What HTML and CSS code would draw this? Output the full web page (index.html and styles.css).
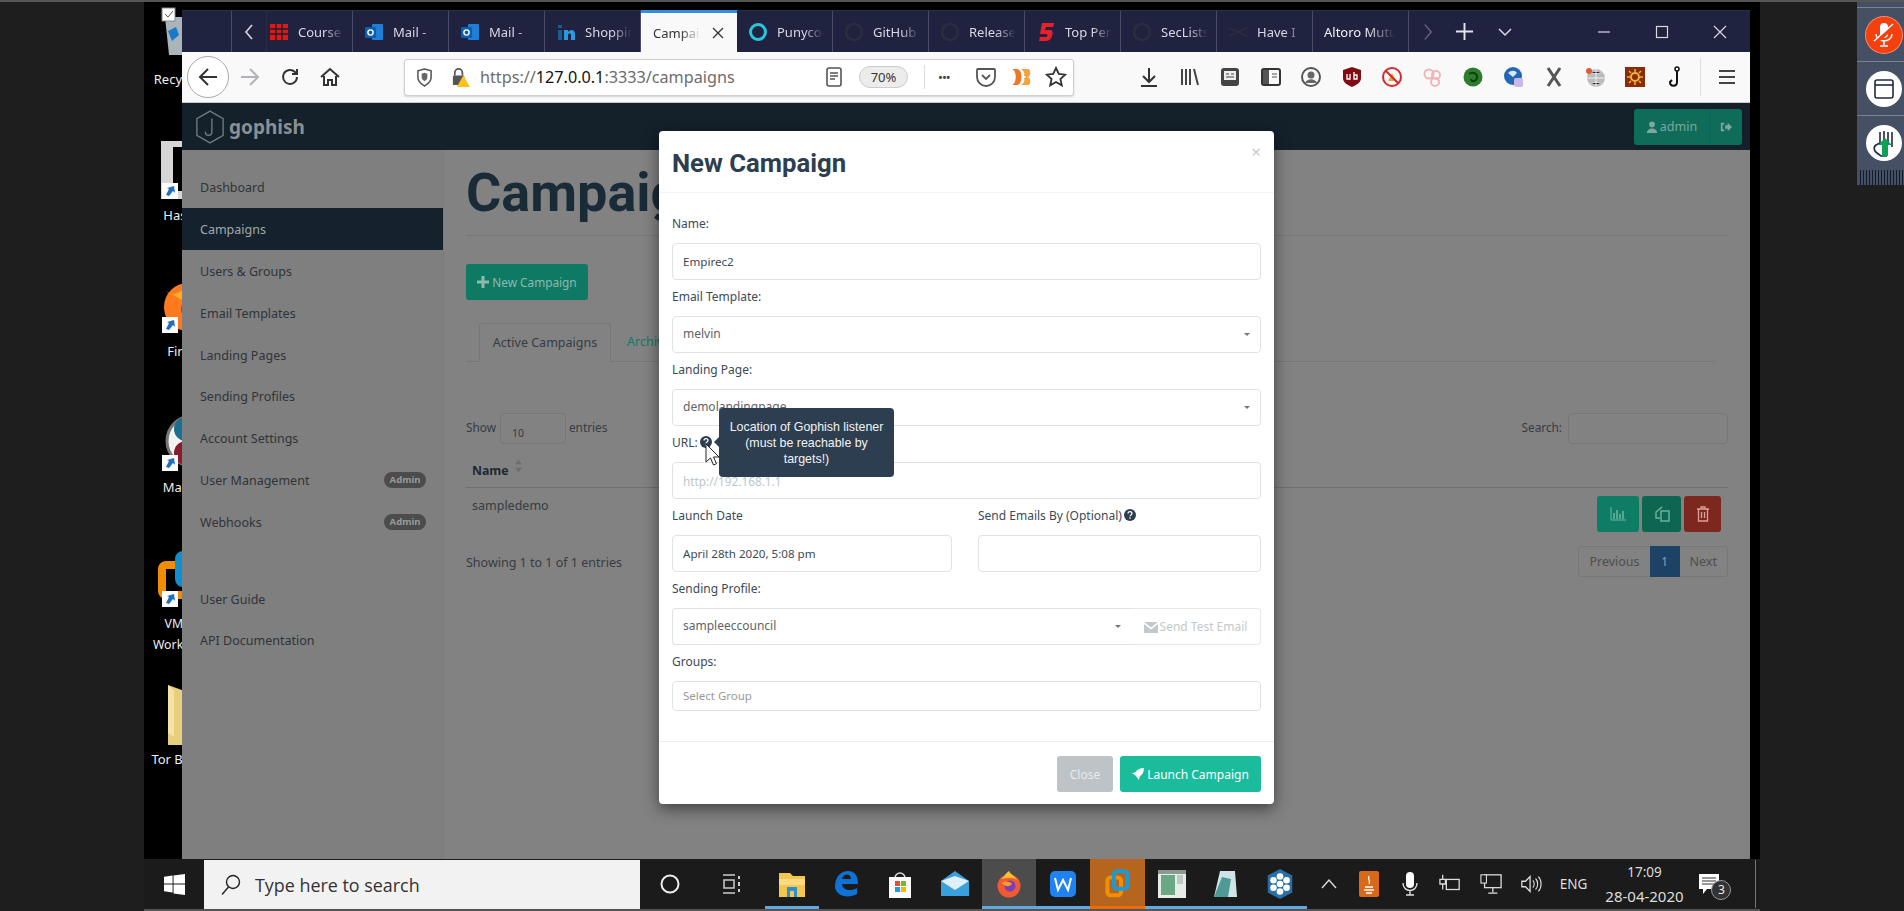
FILE: index.html
```html
<!DOCTYPE html>
<html lang="en">
<head>
    <meta charset="UTF-8">
    <title>Gophish | Campaigns</title>
    <link rel="stylesheet" href="styles.css">
</head>
<body>
<div class="screen">
    <div class="gutter"></div>

    <div class="desktop">
        <div class="desk-area">
            <!-- desktop icons, mostly hidden by the browser -->
            <div class="desk-icons">
                <div class="desk-icon">
                    <svg class="desk-art" viewBox="0 0 80 60"><path d="M17 12h24l-3 38H21z" fill="#aab4bb"/><path d="M20 26l8-4 3 8-7 6z" fill="#1c78c8"/><rect x="14" y="3" width="13" height="13" fill="#fff" stroke="#888"/><path d="M17 9l3 3 5-6" fill="none" stroke="#555"/></svg>
                    <span>Recycle Bin</span>
                </div>
                <div class="desk-icon">
                    <svg class="desk-art" viewBox="0 0 80 60"><path d="M13 0h30v58H13z" fill="#d6d6d6"/><path d="M25 6h20v44H25z" fill="#000"/><rect x="14" y="42" width="16" height="16" fill="#fff"/><path d="M18 54l3-6 -2-1 7-2 1 7-2-2-4 5z" fill="#1f6fc0"/></svg>
                    <span>Hashcat</span>
                </div>
                <div class="desk-icon">
                    <svg class="desk-art" viewBox="0 0 80 60"><circle cx="40" cy="30" r="24" fill="#ff7a1f"/><path d="M18 14c6 6 14 2 24-6l-6 16z" fill="#ffb01f"/><circle cx="44" cy="32" r="11" fill="#7a3fb5"/><rect x="14" y="40" width="16" height="16" fill="#fff"/><path d="M18 52l3-6 -2-1 7-2 1 7-2-2-4 5z" fill="#1f6fc0"/></svg>
                    <span>Firefox</span>
                </div>
                <div class="desk-icon">
                    <svg class="desk-art" viewBox="0 0 80 60"><circle cx="44" cy="28" r="25" fill="#f2f2f2" stroke="#777" stroke-width="3"/><circle cx="38" cy="16" r="12" fill="#1b6f8f"/><circle cx="38" cy="40" r="12" fill="#8a1b2b"/><rect x="14" y="42" width="16" height="16" fill="#fff"/><path d="M18 54l3-6 -2-1 7-2 1 7-2-2-4 5z" fill="#1f6fc0"/></svg>
                    <span>Maltego</span>
                </div>
                <div class="desk-icon desk-icon-vm">
                    <svg class="desk-art" viewBox="0 0 80 60"><rect x="14" y="16" width="32" height="30" rx="4" fill="none" stroke="#f28c00" stroke-width="8"/><rect x="31" y="6" width="26" height="28" rx="4" fill="none" stroke="#0f8fd0" stroke-width="8"/><rect x="14" y="42" width="16" height="16" fill="#fff"/><path d="M18 54l3-6 -2-1 7-2 1 7-2-2-4 5z" fill="#1f6fc0"/></svg>
                    <span>VMware<br>Workstation</span>
                </div>
                <div class="desk-icon">
                    <svg class="desk-art" viewBox="0 0 80 60"><path d="M20 0l22 8v52H20z" fill="#e8cf7c"/><path d="M20 0v48l6 4V6z" fill="#f4e3a4"/></svg>
                    <span>Tor Browser</span>
                </div>
            </div>

            <div class="browser">
                <div class="tabbar">
                    <div class="tab-blank"></div>
                    <div class="tab-scroll">
                        <svg class="ic-14" viewBox="0 0 14 18"><path d="M10 2L4 9l6 7" fill="none" stroke="#d7d8e2" stroke-width="1.6"/></svg>
                    </div>
                    <div class="tab tab-first">
                        <svg class="tab-ic" viewBox="0 0 20 20"><rect x="1" y="2" width="18" height="16" fill="#e01818"/><path d="M1 7h18M1 12h18M7 2v16M13 2v16" stroke="#1d1d30" stroke-width="1.4"/></svg>
                        <span class="tab-text">Course</span>
                    </div>
                    <div class="tab">
                        <svg class="tab-ic" viewBox="0 0 20 20"><rect x="8" y="2" width="11" height="16" rx="1" fill="#1f7fd6"/><rect x="1" y="5" width="11" height="11" rx="1" fill="#0c5fb0"/><circle cx="6.5" cy="10.5" r="2.6" fill="none" stroke="#fff" stroke-width="1.4"/></svg>
                        <span class="tab-text">Mail -</span>
                    </div>
                    <div class="tab">
                        <svg class="tab-ic" viewBox="0 0 20 20"><rect x="8" y="2" width="11" height="16" rx="1" fill="#1f7fd6"/><rect x="1" y="5" width="11" height="11" rx="1" fill="#0c5fb0"/><circle cx="6.5" cy="10.5" r="2.6" fill="none" stroke="#fff" stroke-width="1.4"/></svg>
                        <span class="tab-text">Mail -</span>
                    </div>
                    <div class="tab">
                        <svg class="tab-ic" viewBox="0 0 20 20"><path d="M2 8h4v10H2zM2 3h4v3H2z" fill="#1c5c8c"/><path d="M8 8h4v2c2-3 7-3 7 2v6h-4v-5c0-2-3-2-3 0v5H8z" fill="#2a9ae0"/></svg>
                        <span class="tab-text">Shopping</span>
                    </div>
                    <div class="tab tab-active">
                        <span class="tab-text">Campaigns</span>
                        <svg class="ic-14" viewBox="0 0 14 14"><path d="M2 2l10 10M12 2L2 12" stroke="#333" stroke-width="1.3"/></svg>
                    </div>
                    <div class="tab">
                        <svg class="tab-ic" viewBox="0 0 20 20"><circle cx="10" cy="10" r="7.5" fill="none" stroke="#2bc4dc" stroke-width="3"/></svg>
                        <span class="tab-text">Punycode</span>
                    </div>
                    <div class="tab">
                        <svg class="tab-ic" viewBox="0 0 20 20"><circle cx="10" cy="10" r="8" fill="none" stroke="#2c2d3c" stroke-width="2.4"/></svg>
                        <span class="tab-text">GitHub</span>
                    </div>
                    <div class="tab">
                        <svg class="tab-ic" viewBox="0 0 20 20"><circle cx="10" cy="10" r="8" fill="none" stroke="#2c2d3c" stroke-width="2.4"/></svg>
                        <span class="tab-text">Releases</span>
                    </div>
                    <div class="tab">
                        <svg class="tab-ic" viewBox="0 0 20 20"><path d="M6 1h12l-1 4H10L9 8h5c3 0 3 3 2 6-1 4-4 5-7 5H3l1-4h6c2 0 2-3 0-3H4z" fill="#e8202a"/></svg>
                        <span class="tab-text">Top Pen</span>
                    </div>
                    <div class="tab">
                        <svg class="tab-ic" viewBox="0 0 20 20"><circle cx="10" cy="10" r="8" fill="none" stroke="#2c2d3c" stroke-width="2.4"/></svg>
                        <span class="tab-text">SecLists</span>
                    </div>
                    <div class="tab">
                        <svg class="tab-ic" viewBox="0 0 20 20"><path d="M1 6l18 8M1 14l18-8" stroke="#2c2d3c" stroke-width="1.4"/></svg>
                        <span class="tab-text">Have I</span>
                    </div>
                    <div class="tab tab-plain">
                        <span class="tab-text">Altoro Mutual</span>
                    </div>
                    <div class="tab-tools">
                        <svg class="ic-14" viewBox="0 0 14 22"><path d="M3 2l8 9-8 9" fill="none" stroke="#6e7088" stroke-width="1.5"/></svg>
                        <svg class="ic-plus" viewBox="0 0 20 20"><path d="M10 1v18M1 10h18" stroke="#e4e4ec" stroke-width="2"/></svg>
                        <svg class="ic-14" viewBox="0 0 14 10"><path d="M1 2l6 6 6-6" fill="none" stroke="#d7d8e2" stroke-width="1.5"/></svg>
                    </div>
                    <div class="win-btns">
                        <svg class="ic-14" viewBox="0 0 14 14"><path d="M1 7h12" stroke="#d7d8e2" stroke-width="1.2"/></svg>
                        <svg class="ic-14" viewBox="0 0 14 14"><rect x="1.5" y="1.5" width="11" height="11" fill="none" stroke="#d7d8e2" stroke-width="1.2"/></svg>
                        <svg class="ic-14" viewBox="0 0 14 14"><path d="M1 1l12 12M13 1L1 13" stroke="#d7d8e2" stroke-width="1.2"/></svg>
                    </div>
                </div>

                <div class="navbar">
                    <div class="nav-back">
                        <svg viewBox="0 0 22 22" width="22" height="22"><path d="M11 3l-8 8 8 8M3 11h17" fill="none" stroke="#333" stroke-width="2"/></svg>
                    </div>
                    <svg class="nav-ic" viewBox="0 0 22 22"><path d="M11 3l8 8-8 8M19 11H2" fill="none" stroke="#b4b4b8" stroke-width="2"/></svg>
                    <svg class="nav-ic" viewBox="0 0 22 22"><path d="M18 11a7 7 0 1 1-2-5l2 2M18 3v5h-5" fill="none" stroke="#333" stroke-width="2"/></svg>
                    <svg class="nav-ic" viewBox="0 0 22 22"><path d="M2 11l9-8 9 8M5 10v9h4v-5h4v5h4v-9" fill="none" stroke="#333" stroke-width="2"/></svg>

                    <div class="urlbar">
                        <svg class="url-shield" viewBox="0 0 18 20"><path d="M9 1l7 2v7c0 5-4 7-7 9-3-2-7-4-7-9V3z" fill="none" stroke="#555" stroke-width="1.6"/><path d="M9 5l3 1v4c0 2-2 3-3 4-1-1-3-2-3-4V6z" fill="#666"/></svg>
                        <svg class="url-lock" viewBox="0 0 20 22"><path d="M4 9V6a4 4 0 0 1 8 0v3" fill="none" stroke="#555" stroke-width="1.8"/><rect x="2" y="9" width="12" height="10" rx="1" fill="#555"/><path d="M13 9l7 12H6z" fill="#ffc11f"/></svg>
                        <div class="url-text">https://<b>127.0.0.1</b>:3333/campaigns</div>
                        <svg class="url-reader" viewBox="0 0 18 20"><rect x="2" y="1" width="14" height="18" rx="2" fill="none" stroke="#555" stroke-width="1.6"/><path d="M5 6h8M5 9h8M5 12h5" stroke="#555" stroke-width="1.3"/></svg>
                        <div class="zoom-pill">70%</div>
                        <div class="url-sep"></div>
                        <div class="url-dots">&bull;&bull;&bull;</div>
                        <svg class="url-ic" viewBox="0 0 22 22"><path d="M3 3h16a1 1 0 0 1 1 1v7a9 9 0 0 1-18 0V4a1 1 0 0 1 1-1z" fill="none" stroke="#555" stroke-width="1.8"/><path d="M7 9l4 4 4-4" fill="none" stroke="#555" stroke-width="1.8"/></svg>
                        <svg class="url-ic" viewBox="0 0 22 22"><path d="M2 3h5c6 0 6 16 0 16H2c5-2 5-14 0-16z" fill="#f0762a"/><path d="M11 3h7c3 0 3 7 0 8 3 1 3 8 0 8h-7c3-2 4-4 3-7h2c-1-1-1-1 0-2h-2c1-3 0-5-3-7z" fill="#f3a23c"/></svg>
                        <svg class="url-ic" viewBox="0 0 22 22"><path d="M11 2l2.8 6 6.4.7-4.8 4.3 1.4 6.4L11 16l-5.8 3.4 1.4-6.4L1.8 8.7 8.2 8z" fill="none" stroke="#333" stroke-width="1.8"/></svg>
                    </div>

                    <div class="addons">
                        <svg class="addon" viewBox="0 0 22 22"><path d="M11 2v14M5 10l6 6 6-6M3 20h16" fill="none" stroke="#333" stroke-width="2"/></svg>
                        <svg class="addon" viewBox="0 0 22 22"><path d="M3 3v16M7 3v16M11 3v16M15 3l4 16" fill="none" stroke="#444" stroke-width="2"/></svg>
                        <svg class="addon" viewBox="0 0 22 22"><rect x="2" y="2" width="18" height="18" rx="3" fill="#444"/><rect x="5" y="5" width="12" height="9" fill="#eee"/><path d="M7 8h3M12 8h3M7 11h8" stroke="#444"/></svg>
                        <svg class="addon" viewBox="0 0 22 22"><rect x="2" y="3" width="18" height="16" rx="2" fill="none" stroke="#333" stroke-width="2"/><rect x="3" y="4" width="6" height="14" fill="#555"/><path d="M12 8h5M12 11h5" stroke="#555"/></svg>
                        <svg class="addon" viewBox="0 0 22 22"><circle cx="11" cy="11" r="9" fill="none" stroke="#555" stroke-width="2"/><circle cx="11" cy="9" r="3.5" fill="#666"/><path d="M5 17c2-5 10-5 12 0" fill="#666"/></svg>
                        <svg class="addon" viewBox="0 0 22 22"><path d="M11 1l9 3v8c0 5-5 7-9 9-4-2-9-4-9-9V4z" fill="#7f0d13"/><path d="M6 8v5h3V8M13 6v7h3V9h-3" fill="none" stroke="#fff" stroke-width="1.3"/></svg>
                        <svg class="addon" viewBox="0 0 22 22"><path d="M7 15l4-8 4 8z" fill="#e8a040"/><circle cx="11" cy="11" r="9" fill="none" stroke="#d42a2a" stroke-width="2"/><path d="M5 5l12 12" stroke="#d42a2a" stroke-width="2"/></svg>
                        <svg class="addon" viewBox="0 0 22 22"><circle cx="7" cy="8" r="4.5" fill="none" stroke="#eeb6b6" stroke-width="2"/><circle cx="14" cy="9" r="4" fill="none" stroke="#eeb6b6" stroke-width="2"/><circle cx="13" cy="16" r="4" fill="none" stroke="#eeb6b6" stroke-width="2"/></svg>
                        <svg class="addon" viewBox="0 0 22 22"><circle cx="11" cy="11" r="9.5" fill="#2d7d2d"/><path d="M7 8c4-3 9 0 8 4s-6 4-6 1" fill="none" stroke="#123d12" stroke-width="2"/></svg>
                        <svg class="addon" viewBox="0 0 22 22"><circle cx="10" cy="10" r="9" fill="#2667b5"/><path d="M5 7c3-3 7-3 9 0l-4 4z" fill="#d9e8f5"/><rect x="11" y="12" width="9" height="9" rx="2" fill="#c7b9e6"/></svg>
                        <svg class="addon" viewBox="0 0 22 22"><path d="M5 2l12 18M17 2L5 20" stroke="#555" stroke-width="3"/></svg>
                        <svg class="addon" viewBox="0 0 22 22"><circle cx="12" cy="12" r="9" fill="#bbb"/><path d="M3 12h18M12 3v18M6 6c4 2 8 2 12 0M6 18c4-2 8-2 12 0" stroke="#eee"/><circle cx="5" cy="5" r="3" fill="#e2583a"/></svg>
                        <svg class="addon" viewBox="0 0 22 22"><rect x="1" y="1" width="20" height="20" fill="#8a2c0a"/><circle cx="11" cy="11" r="4" fill="none" stroke="#f0b43c" stroke-width="2"/><path d="M11 3v3M11 16v3M3 11h3M16 11h3M5 5l2 2M15 15l2 2M17 5l-2 2M7 15l-2 2" stroke="#f0b43c" stroke-width="1.5"/></svg>
                        <svg class="addon" viewBox="0 0 22 22"><path d="M12 5v11c0 5-7 5-7 0l2-2" fill="none" stroke="#111" stroke-width="2"/><circle cx="12" cy="3" r="2" fill="none" stroke="#111" stroke-width="1.5"/></svg>
                    </div>
                    <div class="nav-sep"></div>
                    <svg class="nav-menu" viewBox="0 0 18 18"><path d="M1 3h16M1 9h16M1 15h16" stroke="#444" stroke-width="2.2"/></svg>
                </div>

                <div class="app">
                    <div class="app-top">
                        <div class="brand">
                            <svg class="brand-mark" viewBox="0 0 32 36"><path d="M16 1l14 8v18l-14 8L2 27V9z" fill="none" stroke="#6f7880" stroke-width="1.5"/><path d="M18 9v14c0 5-7 5-7 0" fill="none" stroke="#6f7880" stroke-width="1.5"/></svg>
                            <span>gophish</span>
                        </div>
                        <div class="user-btn">
                            <div class="user-name">
                                <svg class="fa" viewBox="0 0 12 14"><circle cx="6" cy="4" r="3.3" fill="#7fa79d"/><path d="M0 14c0-7 12-7 12 0z" fill="#7fa79d"/></svg>admin
                            </div>
                            <div class="user-out">
                                <svg class="fa" viewBox="0 0 14 14"><path d="M1 2h4v2H3v6h2v2H1zM6 5h3V2l5 5-5 5V9H6z" fill="#7fa79d"/></svg>
                            </div>
                        </div>
                    </div>
                    <div class="app-body">
                        <div class="sidebar">
                            <div class="side-item">Dashboard</div>
                            <div class="side-item side-active">Campaigns</div>
                            <div class="side-item">Users &amp; Groups</div>
                            <div class="side-item">Email Templates</div>
                            <div class="side-item">Landing Pages</div>
                            <div class="side-item">Sending Profiles</div>
                            <div class="side-item">Account Settings</div>
                            <div class="side-item">User Management <span class="badge">Admin</span></div>
                            <div class="side-item">Webhooks <span class="badge">Admin</span></div>
                            <div class="side-gap"></div>
                            <div class="side-item">User Guide</div>
                            <div class="side-item">API Documentation</div>
                        </div>
                        <div class="main">
                            <h1 class="page-title">Campaigns</h1>
                            <div class="new-btn">
                                <svg class="fa" viewBox="0 0 12 12"><path d="M4.5 0h3v4.5H12v3H7.5V12h-3V7.5H0v-3h4.5z" fill="#8fb8ae"/></svg>New Campaign
                            </div>
                            <div class="page-tabs">
                                <div class="page-tab page-tab-on">Active Campaigns</div>
                                <div class="page-tab">Archived Campaigns</div>
                            </div>
                            <div class="table-top">
                                <div class="show">Show <span class="show-box">10</span> entries</div>
                                <div class="show">Search: <span class="search-box"></span></div>
                            </div>
                            <div class="table-head">
                                <b>Name</b>
                                <svg class="sort" viewBox="0 0 10 14"><path d="M5 0l4 5H1zM5 14l4-5H1z" fill="#6d6d6d"/></svg>
                            </div>
                            <div class="table-row">
                                <span class="row-name">sampledemo</span>
                                <div class="row-btns">
                                    <div class="act act-green">
                                        <svg viewBox="0 0 16 14" width="16" height="14"><path d="M1 0v13h15" fill="none" stroke="#6cb5a3"/><path d="M4 6v6M7 3v9M10 7v5M13 4v8" stroke="#6cb5a3" stroke-width="1.5"/></svg>
                                    </div>
                                    <div class="act act-dark">
                                        <svg viewBox="0 0 16 16" width="16" height="16"><path d="M8 1L2 6v6h4" fill="none" stroke="#6cb5a3" stroke-width="1.4"/><rect x="7" y="5" width="8" height="10" fill="none" stroke="#6cb5a3" stroke-width="1.4"/></svg>
                                    </div>
                                    <div class="act act-red">
                                        <svg viewBox="0 0 14 16" width="14" height="16"><path d="M1 3h12M5 3V1h4v2M2.5 3v12h9V3M5.5 6v6M8.5 6v6" fill="none" stroke="#d9a29a" stroke-width="1.3"/></svg>
                                    </div>
                                </div>
                            </div>
                            <div class="table-foot">
                                <span>Showing 1 to 1 of 1 entries</span>
                                <div class="pager">
                                    <span class="pager-item">Previous</span>
                                    <span class="pager-item pager-on">1</span>
                                    <span class="pager-item">Next</span>
                                </div>
                            </div>
                        </div>
                    </div>

                    <div class="modal">
                        <div class="modal-head">
                            <h2>New Campaign</h2>
                            <span class="modal-x">&times;</span>
                        </div>
                        <div class="modal-body">
                            <div class="field">
                                <label>Name:</label>
                                <div class="input">Empirec2</div>
                            </div>
                            <div class="field">
                                <label>Email Template:</label>
                                <div class="input input-select">melvin<i class="caret"></i></div>
                            </div>
                            <div class="field">
                                <label>Landing Page:</label>
                                <div class="input input-select">demolandingpage<i class="caret"></i></div>
                            </div>
                            <div class="field">
                                <label>URL:
                                    <svg class="help" viewBox="0 0 14 14"><circle cx="7" cy="7" r="7" fill="#2c3e50"/><path d="M4.7 5.3c0-3 4.6-3 4.6 0 0 1.7-2.3 1.5-2.3 3.2M7 9.6v1.8" fill="none" stroke="#fff" stroke-width="1.5"/></svg>
                                </label>
                                <div class="input input-hint">http://192.168.1.1</div>
                            </div>
                            <div class="field-row">
                                <div class="field field-date">
                                    <label>Launch Date</label>
                                    <div class="input">April 28th 2020, 5:08 pm</div>
                                </div>
                                <div class="field">
                                    <label>Send Emails By (Optional)
                                        <svg class="help" viewBox="0 0 14 14"><circle cx="7" cy="7" r="7" fill="#2c3e50"/><path d="M4.7 5.3c0-3 4.6-3 4.6 0 0 1.7-2.3 1.5-2.3 3.2M7 9.6v1.8" fill="none" stroke="#fff" stroke-width="1.5"/></svg>
                                    </label>
                                    <div class="input"></div>
                                </div>
                            </div>
                            <div class="field">
                                <label>Sending Profile:</label>
                                <div class="input-group">
                                    <div class="input input-select input-joined">sampleeccouncil<i class="caret"></i></div>
                                    <div class="test-btn">
                                        <svg class="fa" viewBox="0 0 14 12"><path d="M0 1h14L7 6.5zM0 3l7 5.5L14 3v9H0z" fill="#c3c8cc"/></svg>Send Test Email
                                    </div>
                                </div>
                            </div>
                            <div class="field">
                                <label>Groups:</label>
                                <div class="input input-short">Select Group</div>
                            </div>
                        </div>
                        <div class="modal-foot">
                            <div class="btn btn-close">Close</div>
                            <div class="btn btn-launch">
                                <svg class="fa" viewBox="0 0 14 14"><path d="M14 0c0 5-2 8-5 10l-1 4-2-3-3-3-3-2 4-1c2-3 5-5 10-5z" fill="#fff"/></svg>Launch Campaign
                            </div>
                        </div>
                    </div>

                    <div class="tooltip">Location of Gophish listener (must be reachable by targets!)</div>
                    <svg class="cursor" viewBox="0 0 15 24"><path d="M1 1v18l4.5-4 3 7 3-1.3-3-6.7H14z" fill="#fff" stroke="#222"/></svg>
                </div>
            </div>
        </div>

        <div class="taskbar">
            <div class="start">
                <svg viewBox="0 0 22 22" width="21" height="21"><path d="M0 3l9-1.3V10H0zM10 1.500L22 0v10H10zM0 11h9v8.500L0 18zM10 11h12v11l-12-1.700z" fill="#fff"/></svg>
            </div>
            <div class="searchbox">
                <svg viewBox="0 0 20 22" width="20" height="22"><circle cx="12" cy="8" r="6.5" fill="none" stroke="#222" stroke-width="1.4"/><path d="M7.5 13L1 20.5" stroke="#222" stroke-width="1.4"/></svg>
                <span>Type here to search</span>
            </div>
            <div class="task-slot task-slot-first">
                <svg class="task-ic" viewBox="0 0 24 24"><circle cx="12" cy="12" r="8.5" fill="none" stroke="#eee" stroke-width="2"/></svg>
            </div>
            <div class="task-slot task-slot-view">
                <svg class="task-ic" viewBox="0 0 24 24"><path d="M3 3h12M3 21h12" stroke="#ccc" stroke-width="1.5"/><rect x="4" y="8" width="10" height="8" fill="none" stroke="#ccc" stroke-width="1.5"/><path d="M19 4v3M19 10v4M19 17v3" stroke="#ccc" stroke-width="2"/></svg>
            </div>
            <div class="task-slot task-run">
                <svg class="task-ic task-big" viewBox="0 0 28 28"><path d="M1 3h11l3 3h12v21H1z" fill="#f3c74f"/><path d="M1 9h26v6H1z" fill="#f9dc82"/><rect x="9" y="17" width="10" height="10" fill="#2b8fd0"/><rect x="12" y="21" width="4" height="6" fill="#f3c74f"/></svg>
            </div>
            <div class="task-slot">
                <svg class="task-ic task-big" viewBox="0 0 28 28"><path d="M3 16C3 6 10 1 16 1c7 0 10 5 10 13H10c0 6 9 8 15 4v6c-9 5-22 2-22-8zm7-7h9c0-6-8-6-9 0z" fill="#0f73d6"/></svg>
            </div>
            <div class="task-slot">
                <svg class="task-ic task-big" viewBox="0 0 28 28"><path d="M9 8a5 5 0 0 1 10 0" fill="none" stroke="#ddd" stroke-width="1.5"/><rect x="3" y="7" width="22" height="21" fill="#fafafa"/><rect x="9" y="11" width="5" height="5" fill="#e8502a"/><rect x="15" y="11" width="5" height="5" fill="#7ab928"/><rect x="9" y="17" width="5" height="5" fill="#1f9be0"/><rect x="15" y="17" width="5" height="5" fill="#f8b800"/></svg>
            </div>
            <div class="task-slot">
                <svg class="task-ic task-big" viewBox="0 0 28 28"><path d="M0 11L14 1l14 10v15H0z" fill="#3aa0dc"/><path d="M0 11l14 9 14-9-14-5z" fill="#dff0fa"/></svg>
            </div>
            <div class="task-slot task-run task-hover">
                <svg class="task-ic task-big" viewBox="0 0 28 28"><circle cx="14" cy="16" r="11.5" fill="#ef5a34"/><path d="M6 9c3-2 4-5 8-8 1 3 7 5 9 11 0-4-9-5-17-3z" fill="#ffbf2a"/><circle cx="15" cy="16" r="5.5" fill="#7b3fb8"/><path d="M7 13c2-2 7-2 10 1-2 3-7 3-10-1z" fill="#ff9a2a"/></svg>
            </div>
            <div class="task-slot task-run">
                <svg class="task-ic task-big" viewBox="0 0 28 28"><rect x="1" y="1" width="26" height="26" rx="5" fill="#1e82f0"/><path d="M6 8l3 12 5-10 5 10 3-12" fill="none" stroke="#fff" stroke-width="2"/></svg>
            </div>
            <div class="task-slot task-run task-vm">
                <svg class="task-ic task-huge" viewBox="0 0 30 40"><rect x="3" y="12" width="17" height="22" rx="4" fill="none" stroke="#f09000" stroke-width="5"/><rect x="11" y="4" width="17" height="22" rx="4" fill="none" stroke="#1a9ad6" stroke-width="5"/></svg>
            </div>
            <div class="task-slot task-run">
                <svg class="task-ic task-huge" viewBox="0 0 30 30"><rect x="1" y="1" width="28" height="28" fill="#e8ece8"/><rect x="4" y="6" width="14" height="20" fill="#6aa884"/><rect x="20" y="6" width="6" height="9" fill="#bcc8c0"/><rect x="1" y="1" width="28" height="4" fill="#8a9a90"/></svg>
            </div>
            <div class="task-slot task-run">
                <svg class="task-ic task-huge" viewBox="0 0 30 30"><path d="M9 2h15l2 26H3z" fill="#cfe4e4"/><path d="M3 28L11 8l9 2-3 18z" fill="#4f9a94"/></svg>
            </div>
            <div class="task-slot task-run">
                <svg class="task-ic task-huge" viewBox="0 0 30 34"><path d="M15 1l13 7v18l-13 7-13-7V8z" fill="#2a6ea8"/><circle cx="15" cy="17" r="3.5" fill="#fff"/><circle cx="15" cy="9" r="3.5" fill="#fff"/><circle cx="15" cy="25" r="3.5" fill="#fff"/><circle cx="8" cy="13" r="3.5" fill="#fff"/><circle cx="22" cy="13" r="3.5" fill="#fff"/><circle cx="8" cy="21" r="3.5" fill="#fff"/><circle cx="22" cy="21" r="3.5" fill="#fff"/></svg>
            </div>
            <div class="tray">
                <div class="tray-slot"><svg class="tray-ic" viewBox="0 0 18 12"><path d="M2 10l7-8 7 8" fill="none" stroke="#ddd" stroke-width="1.4"/></svg></div>
                <div class="tray-slot"><svg class="tray-big" viewBox="0 0 20 26"><rect width="20" height="26" rx="2" fill="#d9691a"/><path d="M6 16h8M5 19h10M7 22h6M10 5c-2 3 2 4 0 8" fill="none" stroke="#fff" stroke-width="1.3"/></svg></div>
                <div class="tray-slot"><svg class="tray-big" viewBox="0 0 20 26"><rect x="6" y="1" width="8" height="16" rx="4" fill="#fff"/><path d="M3 12c0 10 14 10 14 0M10 19v5M6 24h8" fill="none" stroke="#ddd" stroke-width="1.4"/></svg></div>
                <div class="tray-slot"><svg class="tray-big" viewBox="0 0 24 24"><rect x="8" y="7" width="14" height="11" fill="none" stroke="#ddd" stroke-width="1.4"/><path d="M4 2v5M1 7h6v5H1zM4 12v6" fill="none" stroke="#ddd" stroke-width="1.4"/></svg></div>
                <div class="tray-slot"><svg class="tray-big" viewBox="0 0 24 24"><rect x="5" y="2" width="18" height="14" fill="none" stroke="#ddd" stroke-width="1.4"/><path d="M14 16v5M9 22h10" stroke="#ddd" stroke-width="1.4"/><rect x="1" y="2" width="6" height="9" fill="#1b1b1b" stroke="#ddd" stroke-width="1.2"/></svg></div>
                <div class="tray-slot"><svg class="tray-big" viewBox="0 0 24 24"><path d="M2 9h4l5-5v16l-5-5H2z" fill="none" stroke="#ddd" stroke-width="1.4"/><path d="M14 8c2 2 2 6 0 8M17 6c3 3 3 9 0 12M20 4c4 4 4 12 0 16" fill="none" stroke="#ddd" stroke-width="1.2"/></svg></div>
                <div class="tray-lang">ENG</div>
                <div class="clock"><span>17:09</span><span class="clock-date">28-04-2020</span></div>
                <div class="notif">
                    <svg viewBox="0 0 22 22" width="22" height="22"><path d="M1 1h20v15H9l-4 5v-5H1z" fill="#fff"/><path d="M4 5h14M4 8h14M4 11h14" stroke="#333"/></svg>
                    <span class="notif-count">3</span>
                </div>
                <div class="tray-edge"></div>
            </div>
        </div>
    </div>

    <div class="gutter gutter-right">
        <div class="side-panel">
            <div class="panel-slot">
                <div class="panel-circle panel-mic">
                    <svg viewBox="0 0 22 26" width="22" height="26"><rect x="7" y="1" width="8" height="15" rx="4" fill="#fff"/><path d="M3 12c0 9 16 9 16 0M11 19v4M7 24h8" fill="none" stroke="#fff" stroke-width="1.5"/><path d="M1 22L21 4" stroke="#f4400f" stroke-width="4"/><path d="M1 19L20 2" stroke="#fff" stroke-width="1.5"/></svg>
                </div>
            </div>
            <div class="panel-slot">
                <div class="panel-circle">
                    <svg viewBox="0 0 20 20" width="20" height="20"><rect x="1" y="1" width="18" height="18" rx="2" fill="none" stroke="#1e2a44" stroke-width="1.6"/><path d="M1 6h18" stroke="#1e2a44" stroke-width="1.6"/></svg>
                </div>
            </div>
            <div class="panel-slot">
                <div class="panel-circle">
                    <svg viewBox="0 0 28 28" width="28" height="28"><path d="M10 14V3M14 14V2M18 14V3M22 18V3M10 14l-4 2c-3 2-2 6 1 8l4 3h6" fill="none" stroke="#1e2a44" stroke-width="1.6"/><path d="M15 9l7 7h-4v11h-6V16H8z" fill="#0ca356"/></svg>
                </div>
            </div>
            <div class="panel-hatch"></div>
        </div>
    </div>
</div>
</body>
</html>
```

FILE: styles.css
```css
* {
    box-sizing: border-box;
}

html, body {
    margin: 0;
    height: 100%;
    overflow: hidden;
    background: #1e1e1e;
}

body {
    font-family: "Noto Sans", sans-serif;
}

svg {
    flex: none;
    display: block;
}

.screen {
    display: flex;
    width: 1904px;
    height: 911px;
    border-top: 2px solid #555;
}

.gutter {
    width: 144px;
    flex: none;
    background: #1e1e1e;
}

.gutter-right {
    width: 144px;
    display: flex;
    justify-content: flex-end;
    align-items: flex-start;
}

.desktop {
    width: 1616px;
    flex: none;
    display: flex;
    flex-direction: column;
    background: #000;
}

.desk-area {
    flex: 1;
    position: relative;
    overflow: hidden;
}

/* desktop icons */
.desk-icons {
    position: absolute;
    left: 4px;
    top: -1px;
    display: flex;
    flex-direction: column;
}

.desk-icon {
    width: 80px;
    height: 136px;
    text-align: center;
    color: #eee;
    font-size: 13px;
    line-height: 20px;
}

.desk-icon span {
    display: block;
    margin-top: 4px;
}

.desk-icon-vm {
    font-size: 12.3px;
    line-height: 21px;
}

.desk-art {
    width: 80px;
    height: 60px;
    margin-top: 4px;
    overflow: visible;
}

/* browser window */
.browser {
    position: absolute;
    left: 38px;
    top: 8px;
    width: 1568px;
    bottom: 0;
    display: flex;
    flex-direction: column;
}

.tabbar {
    height: 42px;
    flex: none;
    display: flex;
    background: #202340;
    border-top: 1px solid #2a2d4c;
}

.tab-blank {
    width: 50px;
    border-right: 1px solid #4a4c68;
}

.tab-scroll {
    width: 35px;
    display: flex;
    align-items: center;
    justify-content: center;
    border-right: 1px solid #292b48;
}

.ic-14 {
    width: 14px;
    height: 18px;
}

.tab {
    width: 96px;
    display: flex;
    align-items: center;
    gap: 9px;
    padding-left: 11px;
    color: #d7d8e2;
    font-size: 13px;
    border-right: 1px solid #4a4c68;
    overflow: hidden;
}

.tab-first {
    width: 86px;
    padding-left: 2px;
}

.tab-ic {
    width: 20px;
    height: 20px;
}

.tab-text {
    flex: 1;
    min-width: 0;
    padding-right: 8px;
    white-space: nowrap;
    overflow: hidden;
    -webkit-mask-image: linear-gradient(90deg, #000 50%, transparent 85%);
    mask-image: linear-gradient(90deg, #000 50%, transparent 85%);
}

.tab-active {
    background: #f9f9fa;
    color: #333;
    border-top: 3px solid #2f8fe6;
    border-right: none;
    padding: 0 12px;
    margin-top: -1px;
    gap: 2px;
}

.tab-plain {
    color: #f0f0f5;
}

.tab-tools {
    width: 112px;
    display: flex;
    align-items: center;
    gap: 20px;
    padding-left: 12px;
}

.ic-plus {
    width: 19px;
    height: 19px;
    margin-right: 4px;
}

.win-btns {
    flex: 1;
    display: flex;
    align-items: center;
    justify-content: flex-end;
    gap: 44px;
    padding-right: 23px;
}

.navbar {
    height: 51px;
    flex: none;
    display: flex;
    align-items: center;
    background: #f9f9fa;
    border-bottom: 1px solid #c8c8c8;
    padding-left: 5px;
}

.nav-back {
    width: 42px;
    height: 42px;
    border-radius: 50%;
    border: 1px solid #aaa;
    background: #fff;
    display: flex;
    align-items: center;
    justify-content: center;
    margin-right: 10px;
}

.nav-ic {
    width: 22px;
    height: 22px;
    margin-right: 18px;
}

.urlbar {
    width: 670px;
    height: 37px;
    margin-left: 45px;
    display: flex;
    align-items: center;
    background: #fff;
    border: 1px solid #cfcfcf;
    border-radius: 3px;
    box-shadow: 0 1px 2px rgba(0, 0, 0, 0.15);
    padding-left: 11px;
}

.url-shield {
    width: 17px;
    height: 19px;
    margin-right: 18px;
}

.url-lock {
    width: 19px;
    height: 21px;
    margin-right: 10px;
}

.url-text {
    width: 344px;
    font-size: 16.2px;
    color: #6d6d6d;
    white-space: nowrap;
}

.url-text b {
    font-weight: 400;
    color: #111;
}

.url-reader {
    width: 18px;
    height: 20px;
    margin-left: 1px;
}

.zoom-pill {
    width: 49px;
    height: 22px;
    margin-left: 16px;
    border-radius: 11px;
    border: 1px solid #ccc;
    background: #ececec;
    font-size: 13px;
    line-height: 20px;
    text-align: center;
    color: #333;
}

.url-sep {
    width: 1px;
    height: 24px;
    margin-left: 16px;
    background: #ddd;
}

.url-dots {
    width: 24px;
    margin-left: 13px;
    font-size: 13px;
    color: #444;
    letter-spacing: -1px;
}

.url-ic {
    width: 22px;
    height: 22px;
    margin-left: 13px;
}

.addons {
    display: flex;
    margin-left: 64px;
    gap: 18.5px;
}

.addon {
    width: 22px;
    height: 22px;
}

.nav-sep {
    width: 1px;
    height: 38px;
    background: #ddd;
    margin-left: 13px;
}

.nav-menu {
    width: 18px;
    height: 18px;
    margin-left: 17px;
}

/* gophish app, dimmed by the modal backdrop */
.app {
    flex: 1;
    min-height: 0;
    position: relative;
    display: flex;
    flex-direction: column;
    background: #828282;
}

.app-top {
    height: 47px;
    flex: none;
    display: flex;
    align-items: center;
    justify-content: space-between;
    background: #14202a;
    padding: 0 8px 0 13px;
}

.brand {
    display: flex;
    align-items: center;
    gap: 4px;
    font-size: 19px;
    font-weight: 700;
    color: #8a8f94;
}

.brand-mark {
    width: 30px;
    height: 34px;
}

.user-btn {
    width: 108px;
    height: 36px;
    display: flex;
    align-items: center;
    background: #0e6c58;
    border-radius: 3px;
    color: #7fa79d;
    font-size: 12.5px;
}

.user-name {
    flex: 1;
    display: flex;
    align-items: center;
    justify-content: center;
    gap: 2px;
}

.user-out {
    width: 33px;
    height: 100%;
    display: flex;
    align-items: center;
    justify-content: center;
    border-left: 1px solid #0d6452;
}

.fa {
    width: 12px;
    height: 12px;
}

.app-body {
    flex: 1;
    min-height: 0;
    display: flex;
}

.sidebar {
    width: 262px;
    flex: none;
    background: #7f7f7f;
    border-right: 1px solid #7c7c7c;
    padding-top: 16px;
}

.side-item {
    height: 41.8px;
    display: flex;
    align-items: center;
    justify-content: space-between;
    padding: 2px 17px 0 18px;
    color: #2f343a;
    font-size: 12.5px;
}

.side-active {
    background: #15222d;
    color: #a2a8ac;
}

.side-gap {
    height: 35px;
}

.badge {
    width: 42px;
    height: 16px;
    border-radius: 8px;
    background: #4c4c4c;
    color: #9a9a9a;
    font-size: 9.5px;
    font-weight: 700;
    line-height: 16px;
    text-align: center;
}

.main {
    flex: 1;
    min-width: 0;
    padding: 0 22px;
    color: #363c43;
    font-size: 12.5px;
}

.page-title {
    margin: 0;
    height: 86px;
    padding-top: 13px;
    font-family: Roboto, sans-serif;
    font-size: 54px;
    line-height: 60px;
    font-weight: 700;
    color: #1a2b38;
    border-bottom: 1px solid #777;
}

.new-btn {
    width: 122px;
    height: 36px;
    margin-top: 28px;
    display: flex;
    align-items: center;
    justify-content: center;
    gap: 3px;
    background: #0f7a64;
    border-radius: 3px;
    color: #8fb8ae;
    font-size: 11.8px;
}

.page-tabs {
    display: flex;
    margin: 23px 13px 0 0;
    height: 39px;
    border-bottom: 1px solid #777;
}

.page-tab {
    padding: 0 16px;
    line-height: 38px;
    color: #0f7a64;
}

.page-tab-on {
    margin-left: 13px;
    margin-right: 0;
    width: 132px;
    height: 39px;
    padding: 0;
    text-align: center;
    color: #363c43;
    border: 1px solid #777;
    border-bottom-color: #828282;
    border-radius: 3px 3px 0 0;
}

.table-top {
    display: flex;
    justify-content: space-between;
    margin-top: 51px;
}

.show {
    display: flex;
    align-items: flex-start;
    gap: 3px;
    font-size: 11.8px;
    line-height: 28px;
}

.show-box {
    width: 66px;
    height: 31px;
    margin-left: 1px;
    padding: 5px 0 0 11px;
    border: 1px solid #777;
    border-radius: 4px;
    font-size: 10.5px;
}

.search-box {
    width: 160px;
    height: 31px;
    margin-left: 3px;
    border: 1px solid #777;
    border-radius: 4px;
}

.table-head {
    height: 44px;
    display: flex;
    align-items: center;
    gap: 5px;
    padding: 10px 0 0 6px;
    border-bottom: 1px solid #707070;
    color: #1f2932;
    font-size: 12.3px;
}

.sort {
    width: 9px;
    height: 12px;
    margin-top: -10px;
}

.table-row {
    height: 58px;
    display: flex;
    justify-content: space-between;
    padding: 8px 7px 0 6px;
}

.row-name {
    line-height: 20px;
}

.row-btns {
    display: flex;
    gap: 3px;
}

.act {
    height: 36px;
    display: flex;
    align-items: center;
    justify-content: center;
    border-radius: 3px;
}

.act-green {
    width: 42px;
    background: #0f7d66;
}

.act-dark {
    width: 39px;
    background: #0f6650;
}

.act-red {
    width: 37px;
    background: #7c281e;
}

.table-foot {
    display: flex;
    justify-content: space-between;
}

.table-foot > span {
    line-height: 34px;
}

.pager {
    display: flex;
    height: 31px;
    border: 1px solid #777;
    border-radius: 3px;
    color: #4e4e4e;
}

.pager-item {
    padding: 0 10px;
    line-height: 30px;
}

.pager-on {
    width: 30px;
    padding: 0;
    margin: -1px 0;
    line-height: 31px;
    text-align: center;
    background: #1c4266;
    color: #8a9fb0;
}

/* modal */
.modal {
    position: absolute;
    left: 477px;
    top: 28px;
    width: 615px;
    height: 673px;
    display: flex;
    flex-direction: column;
    background: #fff;
    border-radius: 4px;
    box-shadow: 0 5px 15px rgba(0, 0, 0, 0.5);
    color: #3c4a57;
    font-size: 12px;
}

.modal-head {
    height: 62px;
    flex: none;
    display: flex;
    justify-content: space-between;
    padding: 15px 13px 0 13px;
    border-bottom: 1px solid #f4f4f4;
}

.modal-head h2 {
    margin: 0;
    font-family: Roboto, sans-serif;
    font-size: 25.7px;
    line-height: 34px;
    font-weight: 700;
    color: #2c3e50;
}

.modal-x {
    margin-top: -4px;
    font-size: 17px;
    line-height: 20px;
    color: #c8c8c8;
}

.modal-body {
    flex: 1;
    padding: 20px 13px 0 13px;
    display: flex;
    flex-direction: column;
    gap: 6px;
}

.field {
    flex: 1;
    min-width: 0;
}

.modal-body > .field {
    flex: none;
}

.field-row .field-date {
    flex: none;
    width: 280px;
}

.field label {
    display: flex;
    align-items: center;
    gap: 2px;
    height: 20px;
    margin-bottom: 10px;
    line-height: 21px;
}

.help {
    width: 12px;
    height: 12px;
}

.input {
    height: 37px;
    padding: 0 10px;
    display: flex;
    align-items: center;
    justify-content: space-between;
    border: 1px solid #dfe3e6;
    border-radius: 4px;
    font-size: 11.6px;
    white-space: nowrap;
}

.input-select {
    padding-bottom: 2px;
    font-size: 12px;
    color: #5f6468;
}

.input-hint {
    color: #bcc6d0;
    font-size: 11.8px;
}

.input-short {
    height: 30px;
    padding-bottom: 2px;
    color: #9a9a9a;
    font-size: 11.5px;
}

.caret {
    width: 0;
    height: 0;
    margin-top: 2px;
    border-left: 3px solid transparent;
    border-right: 3px solid transparent;
    border-top: 3px solid #777;
}

.field-row {
    display: flex;
    gap: 26px;
}

.input-group {
    display: flex;
}

.input-joined {
    flex: 1;
    border-radius: 4px 0 0 4px;
    border-right: none;
}

.test-btn {
    width: 130px;
    height: 37px;
    display: flex;
    align-items: center;
    justify-content: center;
    gap: 2px;
    border: 1px solid #e6e8ea;
    border-left: none;
    border-radius: 0 4px 4px 0;
    color: #c3c8cc;
}

.test-btn .fa {
    width: 14px;
}

.modal-foot {
    height: 63px;
    flex: none;
    display: flex;
    justify-content: flex-end;
    gap: 7px;
    padding: 14px 13px 0;
    border-top: 1px solid #eee;
}

.btn {
    height: 36px;
    display: flex;
    align-items: center;
    justify-content: center;
    gap: 3px;
    border-radius: 3px;
}

.btn-close {
    width: 56px;
    background: #bdc3c7;
    color: #e8eaec;
}

.btn-launch {
    width: 141px;
    background: #1abc9c;
    color: #fff;
}

/* hover tooltip and pointer over the URL help icon */
.tooltip {
    position: absolute;
    left: 537px;
    top: 305px;
    width: 175px;
    height: 69px;
    display: flex;
    align-items: center;
    padding: 0 8px;
    text-align: center;
    background: #2c3e50;
    border-radius: 4px;
    color: #f2f2f2;
    font-family: "Liberation Sans", sans-serif;
    font-size: 12.4px;
    line-height: 16px;
}

.tooltip::before {
    content: "";
    position: absolute;
    left: -5px;
    top: 29px;
    border-top: 5px solid transparent;
    border-bottom: 5px solid transparent;
    border-right: 5px solid #2c3e50;
}

.cursor {
    position: absolute;
    left: 523px;
    top: 340px;
    width: 15px;
    height: 24px;
}

/* windows taskbar */
.taskbar {
    height: 52px;
    flex: none;
    display: flex;
    background: #1b1b1b;
    border-bottom: 2px solid #555;
}

.start {
    width: 60px;
    display: flex;
    align-items: center;
    justify-content: center;
}

.searchbox {
    width: 436px;
    display: flex;
    align-items: center;
    gap: 14px;
    padding-left: 17px;
    margin-top: 1px;
    background: #f2f2f2;
    color: #333;
    font-family: "Open Sans", sans-serif;
    font-size: 17.9px;
}

.task-slot {
    width: 54.3px;
    display: flex;
    align-items: center;
    justify-content: center;
    border-bottom: 3px solid transparent;
    padding-top: 3px;
}

.task-slot-first {
    width: 59.5px;
}

.task-slot-view {
    width: 65px;
}

.task-run {
    border-bottom-color: #5ea8e6;
}

.task-hover {
    background: #4c4c4c;
}

.task-vm {
    background: #b5651d;
    border-bottom-color: #f06a00;
}

.task-ic {
    width: 24px;
    height: 24px;
}

.task-big {
    width: 28px;
    height: 28px;
}

.task-huge {
    width: 30px;
    height: 32px;
}

.tray {
    flex: 1;
    display: flex;
    align-items: center;
    padding-left: 1px;
    color: #ddd;
    font-size: 13.5px;
}

.tray-slot {
    width: 40.5px;
    display: flex;
    align-items: center;
    justify-content: center;
}

.tray-ic {
    width: 18px;
    height: 12px;
}

.tray-big {
    width: 22px;
    height: 26px;
}

.tray-lang {
    width: 40px;
    margin-left: 2px;
    text-align: center;
}

.clock {
    width: 90px;
    margin-left: 6px;
    display: flex;
    flex-direction: column;
    align-items: center;
    gap: 5px;
    line-height: 19px;
}

.clock-date {
    font-size: 15px;
}

.notif {
    width: 50px;
    margin-left: -5px;
    position: relative;
    display: flex;
    justify-content: center;
}

.notif-count {
    position: absolute;
    left: 27px;
    top: 7px;
    width: 20px;
    height: 20px;
    border-radius: 50%;
    border: 1px solid #999;
    background: #333;
    font-size: 12px;
    line-height: 18px;
    text-align: center;
    color: #eee;
}

.tray-edge {
    width: 1px;
    height: 48px;
    margin-left: auto;
    margin-right: 4px;
    background: #777;
}

/* floating panel at the screen edge */
.side-panel {
    width: 47px;
    height: 183px;
    background: #465064;
    padding-top: 5px;
}

.panel-slot {
    height: 54px;
    display: flex;
    align-items: center;
    justify-content: flex-end;
    padding-right: 2px;
    border-top: 1px solid #7a8396;
}

.panel-circle {
    width: 36px;
    height: 36px;
    border-radius: 50%;
    background: #fff;
    display: flex;
    align-items: center;
    justify-content: center;
}

.panel-mic {
    background: #f4400f;
    box-shadow: 0 0 0 1px #f88a6a;
}

.panel-hatch {
    height: 15px;
    margin: 1px 0 0 3px;
    background: repeating-linear-gradient(90deg, #141c2c 0 1px, #465064 1px 3px);
}
```
